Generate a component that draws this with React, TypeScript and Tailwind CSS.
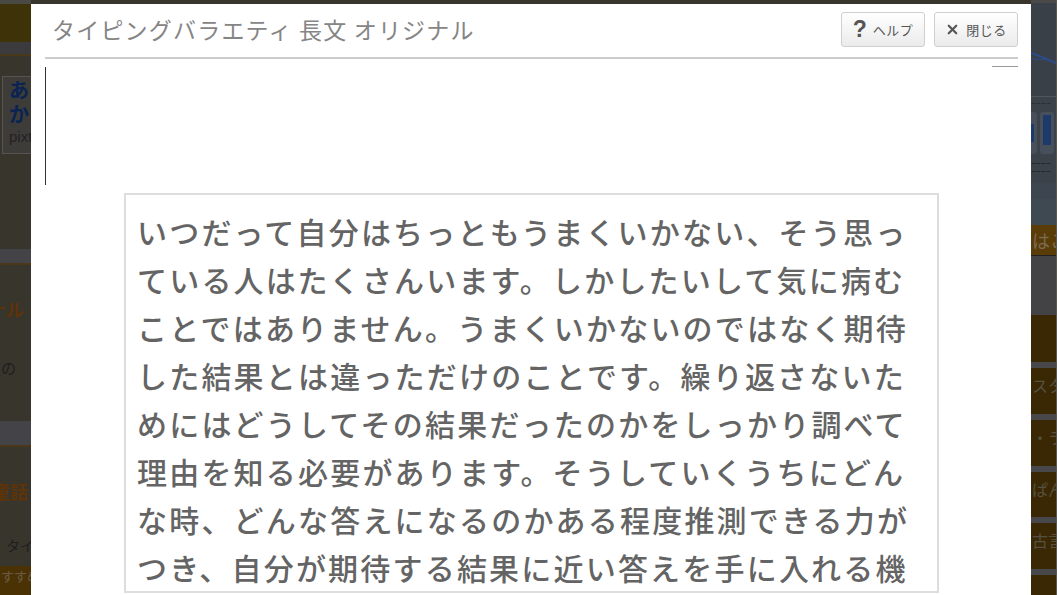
import { X } from 'lucide-react';

const lines = [
  'いつだって自分はちっともうまくいかない、そう思っ',
  'ている人はたくさんいます。しかしたいして気に病む',
  'ことではありません。うまくいかないのではなく期待',
  'した結果とは違っただけのことです。繰り返さないた',
  'めにはどうしてその結果だったのかをしっかり調べて',
  '理由を知る必要があります。そうしていくうちにどん',
  'な時、どんな答えになるのかある程度推測できる力が',
  'つき、自分が期待する結果に近い答えを手に入れる機',
];

const LeftStrip = () => (
  <div className="flex w-[31px] shrink-0 flex-col overflow-hidden whitespace-nowrap">
    <div className="h-[4px] bg-[#4a4a45]" />
    <div className="h-[39px] bg-[#3d3208]" />
    <div className="h-[12px] bg-[#3b3b3e]" />
    <div className="h-[2px] bg-[#4a3818]" />
    <div className="h-[20px] bg-[#38352d]" />
    {/* card */}
    <div className="h-[80px] bg-[#38352d] pl-[2px]">
      <div className="h-full w-[40px] border border-[#55544f] bg-[#3d3c39] pl-[6px] pt-[1px]">
        <div className="text-[20px] font-bold leading-[24px] text-[#0b2352]">あ</div>
        <div className="text-[20px] font-bold leading-[24px] text-[#0b2352]">か</div>
        <div className="font-['Liberation_Sans',sans-serif] text-[15px] leading-[22px] text-[#222]">pixta</div>
      </div>
    </div>
    <div className="h-[96px] bg-[#38352d]" />
    <div className="h-[14px] bg-[#434348]" />
    <div className="h-[2px] bg-[#4a3818]" />
    <div className="flex h-[159px] flex-col bg-[#38352d]">
      <div className="-ml-[12px] mt-[34px] text-[18px] font-bold leading-[20px] text-[#5e3306]">ナル</div>
      <div className="-ml-[14px] mt-[40px] text-[15px] leading-[18px] text-[#1e1e1e]">文の</div>
    </div>
    <div className="h-[24px] bg-[#434348]" />
    <div className="h-[2px] bg-[#4a3818]" />
    <div className="flex h-[121px] flex-col bg-[#38352d]">
      <div className="-ml-[8px] mt-[34px] text-[18px] font-bold leading-[20px] text-[#5e3306]">童話</div>
      <div className="ml-[6px] mt-[35px] text-[14px] leading-[18px] text-[#1e1e1e]">タイ</div>
    </div>
    <div className="h-[30px] bg-[#4a3205] pl-[1px] text-[13px] leading-[20px] text-[#6a5a44]">すすめ</div>
  </div>
);

const RightBand = ({ label }: { label: string }) => (
  <>
    <div className="h-[6px] bg-[#48484a]" />
    <div className="h-[46px] bg-[#3a2805] pl-[1px] pt-[8px] text-[16px] leading-[18px] text-[#55503f]">{label}</div>
  </>
);

const RightStrip = () => (
  <div className="flex w-[26px] shrink-0 overflow-hidden whitespace-nowrap">
    <div className="flex w-[25px] flex-col">
      <div className="h-[3px] bg-[#4a4a48]" />
      <div className="relative h-[94px] bg-[#3a4048]">
        <svg className="absolute left-0 top-[40px]" width="25" height="24" viewBox="0 0 25 24">
          <path d="M0 10 Q12 14 25 20" stroke="#2c4c8c" strokeWidth="2" fill="none" />
          <path d="M0 16 L20 17" stroke="#2c4c8c" strokeWidth="1" fill="none" />
        </svg>
      </div>
      <div className="h-px bg-[#50565c]" />
      <div className="h-[12px] bg-[#3c4249] text-[5px] leading-[12px] text-[#222]">ーーーー</div>
      <div className="flex h-[50px] gap-[3px] bg-[#3c4249] pt-[3px]">
        <div className="h-[42px] w-[6px] rounded-r-[3px] bg-[#47505a]">
          <div className="mt-[12px] h-[18px] w-[3px] bg-[#1e3a6a]" />
        </div>
        <div className="h-[42px] w-[14px] rounded-[3px] bg-[#47505a] p-[3px]">
          <div className="h-[30px] w-[8px] bg-[#1e3a6a]" />
        </div>
      </div>
      <div className="h-[24px] bg-[#3c4249] text-[5px] leading-[8px] text-[#111]">
        <div>ーーーー</div>
        <div>ーーーー</div>
      </div>
      <div className="h-[16px] bg-[#3d4550]" />
      <div className="h-[26px] bg-[#3e4952]" />
      <div className="h-[30px] bg-[#5a3c08] pl-[1px] text-[18px] leading-[30px] text-[#7a6a50]">はこ</div>
      <div className="h-px bg-[#222]" />
      <div className="h-[60px] bg-[#434345]" />
      <div className="h-[47px] bg-[#3a2805]" />
      <RightBand label="スタ" />
      <RightBand label="・ラ" />
      <RightBand label="ぱん" />
      <RightBand label="古言" />
      <div className="h-[6px] bg-[#48484a]" />
      <div className="h-[20px] bg-[#3a2805]" />
    </div>
    <div className="w-px bg-[#5a5a52]" />
  </div>
);

const HeaderButton = ({ icon, label }: { icon: React.ReactNode; label: string }) => (
  <button className="flex h-[35px] w-[84px] items-center justify-center gap-[6px] rounded-[3px] border border-[#cfcfcf] bg-gradient-to-b from-white to-[#ebebeb] text-[13px] text-[#555]">
    {icon}
    <span className="tracking-[0.5px]">{label}</span>
  </button>
);

export default function App() {
  return (
    <div className="relative h-[595px] w-[1057px] overflow-hidden bg-[#38352d] font-['Noto_Sans_CJK_JP',sans-serif]">
      {/* dimmed page behind the modal */}
      <div className="flex h-full justify-between">
        <LeftStrip />
        <RightStrip />
      </div>

      {/* Modal */}
      <div className="absolute left-[31px] top-[4px] h-[620px] w-[1000px] bg-white pl-[14px] pr-[13px]">
        {/* Header */}
        <div className="flex items-center justify-between border-b-2 border-[#cccccc] pb-[10px] pt-[8px]">
          <h1 className="pl-[7px] text-[23px] font-normal tracking-[1.2px] text-[#858585]">
            タイピングバラエティ 長文 オリジナル
          </h1>
          <div className="flex gap-[9px]">
            <HeaderButton
              icon={<span className="font-['Liberation_Sans',sans-serif] text-[23px] font-bold leading-none text-[#555]">?</span>}
              label="ヘルプ"
            />
            <HeaderButton icon={<X className="h-[15px] w-[15px] text-[#555]" strokeWidth={3.5} />} label="閉じる" />
          </div>
        </div>

        <div className="mt-[7px] flex justify-end">
          <div className="h-px w-[26px] bg-[#999]" />
        </div>
        {/* caret */}
        <div className="h-[118px] w-px bg-[#333]" />

        {/* Text box */}
        <div className="mx-auto mt-[8px] w-[815px] border-2 border-[#dddddd] pl-[11px] pr-[15px] pt-[12px]">
          {lines.map((line) => (
            <div key={line} className="whitespace-nowrap text-[30px] font-medium leading-[48px] tracking-[2.2px] text-[#646464]">
              {line}
            </div>
          ))}
        </div>
      </div>
    </div>
  );
}
